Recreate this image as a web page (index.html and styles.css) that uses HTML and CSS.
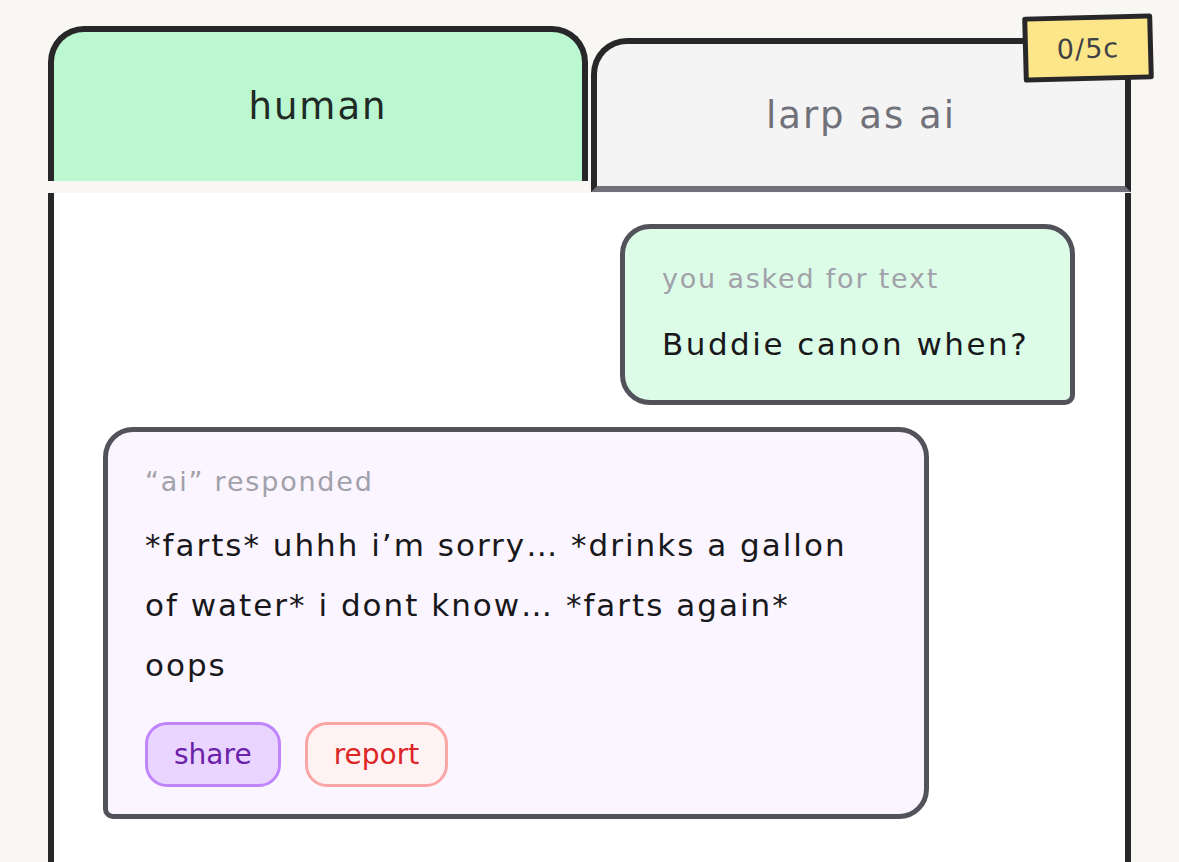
FILE: index.html
```html
<!DOCTYPE html>
<html lang="en">
<head>
    <meta charset="UTF-8">
    <meta name="viewport" content="width=device-width, initial-scale=1.0">
    <title>human or ai</title>
    <link rel="stylesheet" href="styles.css">
</head>
<body>
    <div class="app">
        <div class="tabs">
            <button class="tab tab-active">human</button>
            <button class="tab tab-idle">larp as ai<span class="credits">0/5c</span></button>
        </div>

        <div class="panel">
            <div class="msg msg-user">
                <p class="msg-label">you asked for text</p>
                <p class="msg-text">Buddie canon when?</p>
            </div>

            <div class="msg msg-ai">
                <p class="msg-label">“ai” responded</p>
                <p class="msg-text">*farts* uhhh i’m sorry… *drinks a gallon of water* i dont know… *farts again* oops</p>
                <div class="actions">
                    <button class="btn btn-share">share</button>
                    <button class="btn btn-report">report</button>
                </div>
            </div>
        </div>
    </div>
</body>
</html>
```

FILE: styles.css
```css
body {
    margin: 0;
    padding: 0;
    background-color: #f8f7f4;
    font-family: "DejaVu Sans", "Noto Sans", sans-serif;
    color: #18181b;
}

.app {
    width: 1083px;
    margin-left: 48px;
    padding-top: 26px;
}

/* Abas */
.tabs {
    display: flex;
    gap: 3px;
    align-items: flex-start;
    height: 167px;
}

.tab {
    flex: 1;
    box-sizing: border-box;
    border: 6px solid #27272a;
    border-bottom: none;
    border-radius: 36px 36px 0 0;
    font-family: inherit;
    font-size: 37px;
    letter-spacing: 2px;
    cursor: pointer;
    padding: 0;
}

.tab-active {
    height: 155px;
    background-color: #bbf7d0;
    color: #1f2a24;
}

.tab-idle {
    position: relative;
    height: 154px;
    margin-top: 12px;
    background-color: #f4f4f5;
    color: #71717a;
    border-bottom: 6px solid #71717a;
}

.credits {
    position: absolute;
    top: -29px;
    right: -28px;
    width: 130px;
    height: 66px;
    box-sizing: border-box;
    display: flex;
    align-items: center;
    justify-content: center;
    background-color: #fde68a;
    border: 5px solid #27272a;
    border-radius: 3px;
    color: #3f3f46;
    font-size: 27px;
    letter-spacing: 1px;
    transform: rotate(-1.5deg);
}

/* Painel */
.panel {
    box-sizing: border-box;
    min-height: calc(100vh - 193px);
    background-color: #fff;
    border-left: 6px solid #27272a;
    border-right: 6px solid #27272a;
    padding: 31px 50px 40px 49px;
    display: flex;
    flex-direction: column;
    gap: 22px;
}

.msg {
    box-sizing: border-box;
    border: 5px solid #52525b;
    border-radius: 30px;
}

.msg p {
    margin: 0;
}

.msg-label {
    font-size: 27px;
    line-height: 34px;
    color: #a1a1aa;
    letter-spacing: 1.8px;
}

.msg-text {
    font-size: 31px;
    line-height: 60px;
    letter-spacing: 2.5px;
    color: #18181b;
}

.msg-user {
    align-self: flex-end;
    width: 455px;
    background-color: #dcfce7;
    border-bottom-right-radius: 10px;
    padding: 33px 20px 26px 37px;
}

.msg-user .msg-label {
    margin-bottom: 18px;
}

.msg-user .msg-text {
    white-space: nowrap;
}

.msg-ai {
    width: 826px;
    background-color: #faf5ff;
    border-bottom-left-radius: 10px;
    padding: 33px 54px 27px 37px;
}

.msg-ai .msg-label {
    margin-bottom: 16px;
}

.msg-ai .msg-text {
    letter-spacing: 2px;
}

.actions {
    display: flex;
    gap: 24px;
    margin-top: 27px;
}

.btn {
    height: 65px;
    box-sizing: border-box;
    padding: 0 26px;
    border-radius: 22px;
    border: 3px solid;
    font-family: inherit;
    font-size: 28px;
    cursor: pointer;
}

.btn-share {
    background-color: #e9d5ff;
    border-color: #c084fc;
    color: #6b21a8;
}

.btn-report {
    background-color: #fef2f2;
    border-color: #fca5a5;
    color: #dc2626;
}
```
